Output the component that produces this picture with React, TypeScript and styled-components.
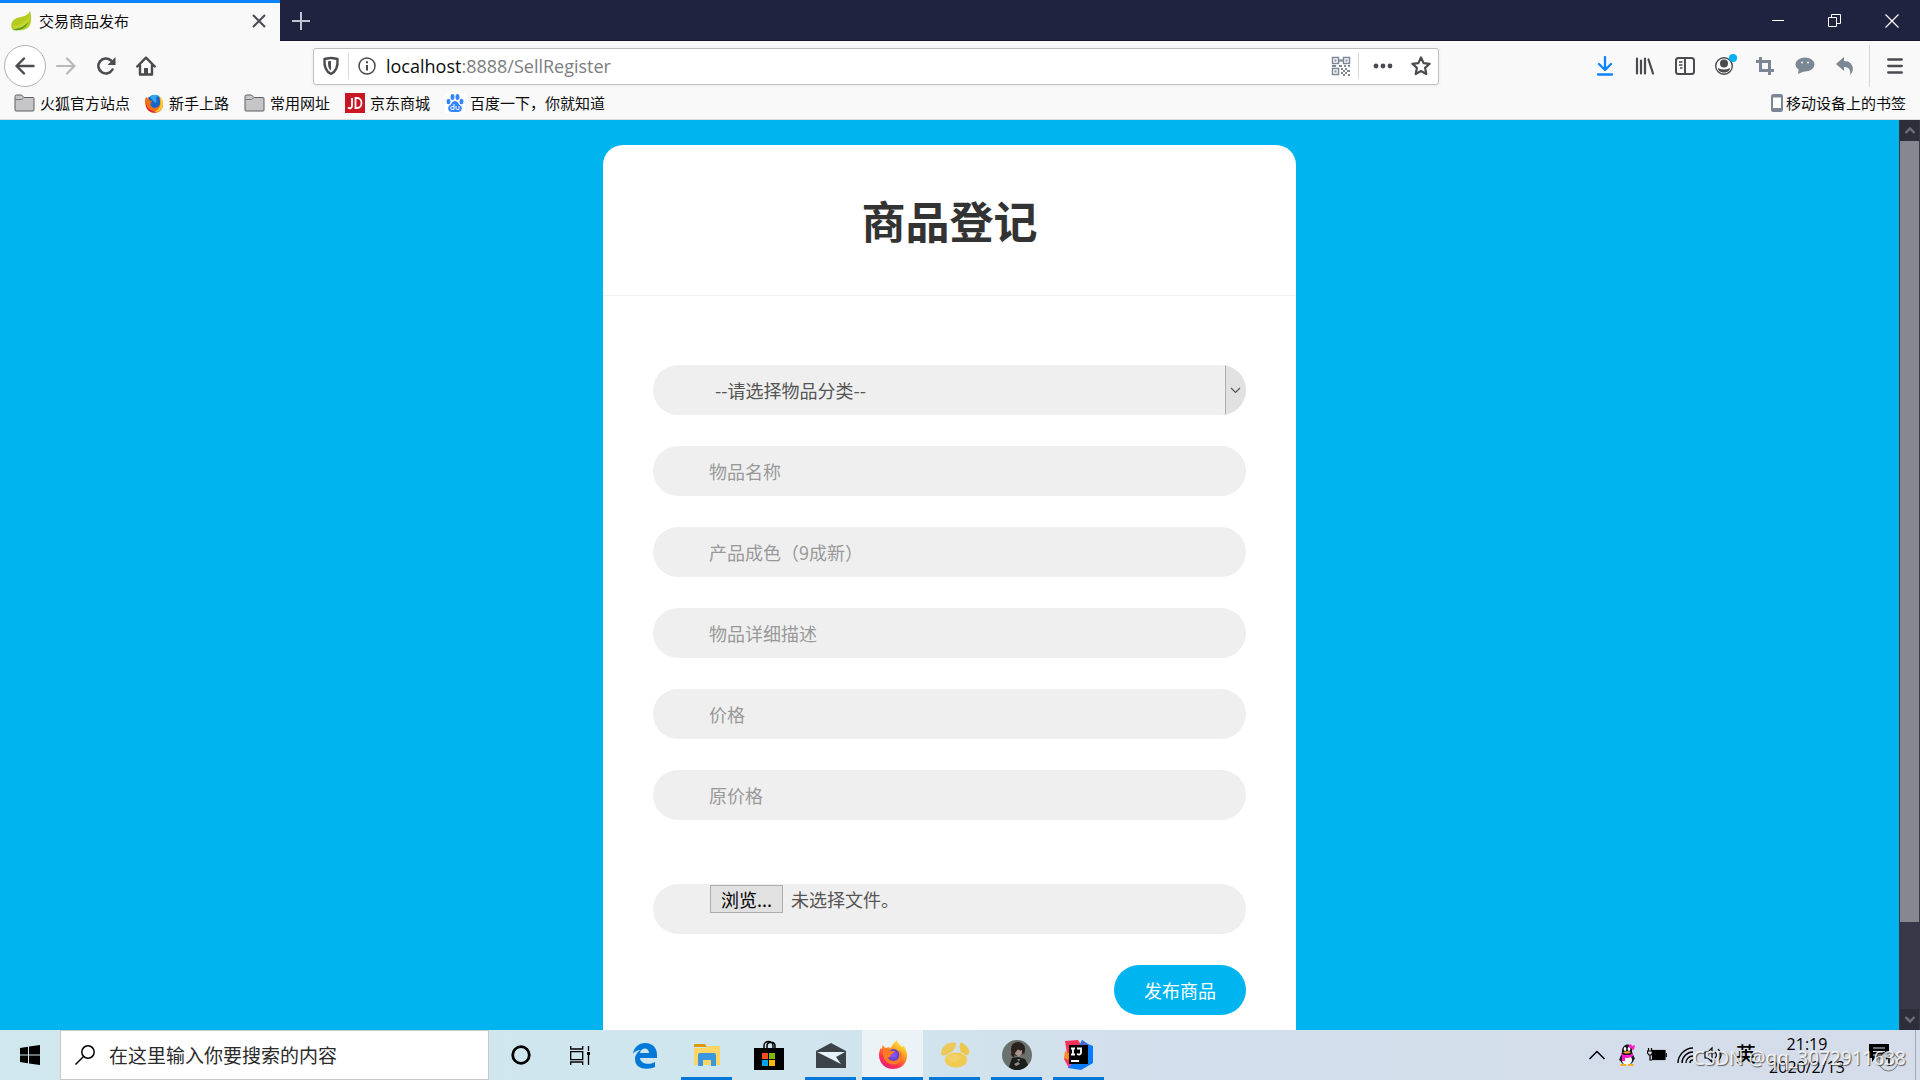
import React from "react";
import styled, { createGlobalStyle, css } from "styled-components";

const sans = `"Noto Sans", "Noto Sans CJK SC", sans-serif`;
const cjk = `"Noto Sans CJK SC", "Noto Sans", sans-serif`;

const GlobalStyle = createGlobalStyle`
  *, *::before, *::after { box-sizing: border-box; }
  html, body, #root { height: 100%; margin: 0; }
  body { overflow: hidden; font-family: ${cjk}; font-size: 15px; color: #0c0c0d; }
  button, input, select { font: inherit; color: inherit; margin: 0; }
  button { border: 0; padding: 0; background: none; }
  a { color: inherit; text-decoration: none; }
  svg { display: block; flex: none; }
`;

const Desktop = styled.div`
  display: flex;
  flex-direction: column;
  height: 100vh;
`;

/* ---------- browser chrome ---------- */

const TitleBar = styled.header`
  display: flex;
  height: 41px;
  background: #202340;
  box-shadow: inset 0 -1px #15162c;
`;

const Tab = styled.div`
  display: flex;
  align-items: center;
  gap: 7px;
  width: 280px;
  padding: 0 13px 2px 10px;
  border-top: 3px solid #0a84ff;
  background: #f9f9fa;
`;

const TabTitle = styled.span`
  flex: 1;
  line-height: 20px;
`;

const IconButton = styled.button<{ $w?: number }>`
  display: flex;
  align-items: center;
  justify-content: center;
  width: ${(p) => p.$w ?? 40}px;
  color: #4a4a4f;
`;

const WindowControls = styled.div`
  display: flex;
  margin-left: auto;
`;

const Toolbar = styled.nav`
  display: flex;
  align-items: center;
  height: 50px;
  padding-left: 4px;
  background: #f9f9fa;
`;

const NavButtons = styled.div`
  display: flex;
  align-items: center;
  width: 309px;
`;

const BackButton = styled.button`
  display: flex;
  align-items: center;
  justify-content: center;
  width: 42px;
  height: 42px;
  border: 1px solid #b1b1b3;
  border-radius: 50%;
  background: #fff;
  color: #4a4a4f;
`;

const UrlBar = styled.div`
  display: flex;
  align-items: center;
  flex: 0 1 1126px;
  height: 37px;
  padding-right: 3px;
  border: 1px solid #bebebf;
  border-radius: 3px;
  background: #fff;
  box-shadow: 0 1px 4px rgba(0, 0, 0, 0.06);
`;

const Divider = styled.span<{ $h: number }>`
  width: 1px;
  height: ${(p) => p.$h}px;
  background: #d7d7db;
`;

const Address = styled.div`
  flex: 1;
  padding-left: 1px;
  font: 18px/26px "Open Sans", ${sans};
  color: #7d7d7f;
`;

const Host = styled.span`
  color: #0c0c0d;
`;

const Tools = styled.div`
  display: flex;
  align-items: center;
  margin-left: auto;
`;

const ToolGroup = styled.div`
  display: flex;
  align-items: center;
  padding-right: 4px;
`;

const Bookmarks = styled.nav`
  display: flex;
  align-items: center;
  gap: 15px;
  height: 29px;
  padding: 0 14px 4px;
  border-bottom: 1px solid #d9dadd;
  background: #f9f9fa;
`;

const Bookmark = styled.a<{ $end?: boolean }>`
  display: flex;
  align-items: center;
  gap: 5px;
  line-height: 20px;
  ${(p) =>
    p.$end &&
    css`
      gap: 3px;
      margin-left: auto;
    `}
`;

/* ---------- page ---------- */

const Viewport = styled.div`
  display: flex;
  flex: 1;
  min-height: 0;
`;

const Page = styled.main`
  flex: 1;
  padding: 25px 20px 0;
  overflow: hidden;
  background: #00b4f0;
`;

const Card = styled.form`
  max-width: 693px;
  margin: 0 auto;
  border-radius: 20px;
  background: #fff;
`;

const Heading = styled.h1`
  margin: 0;
  padding: 43px 0;
  border-bottom: 1px solid #efefef;
  font-size: 44px;
  line-height: 64px;
  font-weight: 700;
  text-align: center;
  color: #333;
`;

const Fields = styled.div`
  display: flex;
  flex-direction: column;
  gap: 31px;
  padding: 69px 50px 60px;
  font-size: 18px;
  color: #555;
`;

const pill = css`
  width: 100%;
  height: 50px;
  border: 0;
  border-radius: 25px;
  background: #efefef;
`;

const TextField = styled.input`
  ${pill}
  padding: 0 56px;
  outline: 0;
  &::placeholder { color: #999; opacity: 1; }
`;

const SelectShell = styled.div`
  ${pill}
  display: grid;
  grid-template-columns: 1fr 21px;
  overflow: hidden;
`;

const Select = styled.select`
  grid-area: 1 / 1 / 2 / 3;
  appearance: none;
  padding: 0 62px 1px;
  border: 0;
  outline: 0;
  background: transparent;
`;

const SelectArrow = styled.span`
  grid-area: 1 / 2;
  display: flex;
  align-items: center;
  justify-content: center;
  padding-right: 2px;
  border-left: 1px solid #adadad;
  background: #e1e1e1;
  pointer-events: none;
`;

const FileShell = styled.label`
  ${pill}
  display: flex;
  align-items: flex-start;
  gap: 8px;
  margin-top: 33px;
  padding: 1px 57px;
  line-height: 28px;
`;

const FileInput = styled.input`
  position: absolute;
  width: 1px;
  height: 1px;
  opacity: 0;
`;

const BrowseLabel = styled.span`
  width: 73px;
  height: 28px;
  border: 1px solid #adadad;
  background: #e1e1e1;
  line-height: 26px;
  text-align: center;
  color: #000;
`;

const Submit = styled.button`
  align-self: flex-end;
  width: 132px;
  height: 50px;
  border-radius: 25px;
  background: #00b4f0;
  color: #fff;
`;

const ScrollBar = styled.aside`
  display: flex;
  flex-direction: column;
  width: 21px;
  padding: 0 1px;
  background: #383849;
`;

const ScrollStep = styled.button`
  display: flex;
  align-items: center;
  justify-content: center;
  height: 21px;
  background: #2e2e3b;
  color: #6f6f7b;
`;

const ScrollTrack = styled.div`
  flex: 1;
`;

const ScrollThumb = styled.div`
  height: 90%;
  background: #878791;
`;

/* ---------- taskbar ---------- */

const Taskbar = styled.footer`
  display: flex;
  height: 50px;
  background: linear-gradient(90deg, #d0e7ee 0%, #d0e6ee 38%, #d2dfec 62%, #d5dcea 100%);
  color: #000;
`;

const StartButton = styled(IconButton)`
  color: #000;
`;

const SearchBox = styled.label`
  display: flex;
  align-items: center;
  gap: 14px;
  flex: 0 1 429px;
  padding: 0 14px;
  border: 1px solid #c5c9cb;
  background: #fff;
`;

const SearchInput = styled.input`
  flex: 1;
  min-width: 0;
  padding: 0 0 2px;
  border: 0;
  outline: 0;
  font-size: 19px;
  &::placeholder { color: #2b2b2b; opacity: 1; }
`;

const TaskTile = styled.button<{ $open?: boolean; $active?: boolean }>`
  display: flex;
  align-items: center;
  justify-content: center;
  width: ${(p) => (p.$active ? 61 : 51)}px;
  margin: 0 ${(p) => (p.$active ? 0 : 5)}px 0 ${(p) => (p.$active ? 1 : 6)}px;
  padding-top: 3px;
  border-bottom: 3px solid ${(p) => (p.$open ? "#0078d7" : "transparent")};
  background: ${(p) => (p.$active ? "#ebf3f6" : "none")};
`;

const Tray = styled.div`
  display: flex;
  align-items: center;
  margin-left: auto;
  position: relative;
`;

const ImeButton = styled(IconButton)`
  padding-bottom: 3px;
  font-size: 20px;
  font-weight: 500;
  color: #000;
`;

const Clock = styled.time`
  display: flex;
  flex-direction: column;
  width: 86px;
  padding-top: 2px;
  font: 16px/23px "Open Sans", ${sans};
  text-align: center;
`;

const ActionCenter = styled.button`
  display: flex;
  align-items: center;
  align-self: stretch;
  width: 48px;
  margin-left: 17px;
`;

const ShowDesktop = styled.span`
  align-self: stretch;
  width: 5px;
  border-left: 1px solid #a4abb5;
`;

const Watermark = styled.span`
  position: absolute;
  right: 14px;
  bottom: 9px;
  font: 19px/26px "Noto Sans", sans-serif;
  color: rgba(255, 255, 255, 0.85);
  text-shadow: 1px 1px 1px rgba(50, 50, 50, 0.75);
  white-space: nowrap;
  pointer-events: none;
`;

/* ---------- drawings ---------- */

type IcoProps = { w?: number; h?: number; sw?: number; children: React.ReactNode };
const Ico = ({ w = 20, h = w, sw = 2, children }: IcoProps) => (
  <svg width={w} height={h} viewBox={`0 0 ${w} ${h}`} fill="none" stroke="currentColor" strokeWidth={sw} aria-hidden="true">
    {children}
  </svg>
);

const Leaf = () => (
  <Ico w={22} h={22}>
    <g stroke="none">
      <path d="M20 1c2 7 2 15-4 18-4 2-9 1-13 1-3-3-2-9 2-11C9 6 17 8 20 1z" fill="#b5cc1f" />
      <path d="M2 16c6 0 13-3 18-10-1 7-6 12-15 12z" fill="#d3dc3c" opacity=".6" />
      <path d="M3 20c5 1 13-1 15-8-4 5-8 6-15 8z" fill="#4f9a2b" />
    </g>
  </Ico>
);

const FolderIcon = () => (
  <Ico w={21} h={18} sw={1}>
    <path d="M1 2.500a1.500 1.500 0 0 1 1.500-1.500h5L10 3.500h9a1 1 0 0 1 1 1V16a1 1 0 0 1-1 1H2a1 1 0 0 1-1-1z" fill="#c6c6c8" stroke="#5f5f61" />
    <path d="M1.500 5.500h6l2-1.500" stroke="#77777a" />
  </Ico>
);

const Firefox = ({ size }: { size: number }) => (
  <svg width={size} height={size} viewBox="0 0 30 30" aria-hidden="true">
    <defs>
      <linearGradient id="fxOuter" x1=".8" y1="0" x2=".2" y2="1">
        <stop offset="0" stopColor="#fff44f" />
        <stop offset=".35" stopColor="#ffa21e" />
        <stop offset=".7" stopColor="#ff3b47" />
        <stop offset="1" stopColor="#e31587" />
      </linearGradient>
      <radialGradient id="fxGlobe">
        <stop offset="0" stopColor="#9059ff" />
        <stop offset="1" stopColor="#5b3fc4" />
      </radialGradient>
    </defs>
    <path d="M5 5c1 2 2 3 3 3 2-1 4-1 5 0 1-3 3-6 6-8 0 3 3 4 5 7 1 0 1-1 1-2 4 5 5 11 3 16-2 5-7 8-13 8C7 29 1 23 1 15c0-3 1-6 2-7 0 1 1 1 1 1 0-1 0-3 1-4z" fill="url(#fxOuter)" />
    <circle cx="15.5" cy="15" r="6" fill="url(#fxGlobe)" />
    <path d="M5 10c3-2 6-1 8 1h4c0 2-3 2-4 4 0 2-2 3-4 2 2 4 7 5 10 3 3-2 4-7 1-10 5 2 5 9 2 12-4 4-12 3-15-2-2-3-3-7-2-10z" fill="#ff7a26" />
  </svg>
);

const OldFirefox = () => (
  <Ico w={19} h={19}>
    <g stroke="none">
      <circle cx="9.5" cy="9" r="8" fill="#1666c9" />
      <path d="M5 3c3-3 8-3 10 0-3-1-4 0-4 2 1 1 1 3-1 4z" fill="#38a4ec" />
      <path d="M1 3c1 1 2 1 3 2 0 1 1 2 3 2-1 2-2 3-1 5 2 3 6 2 8 0 2-3 1-6 0-8 5 3 5 9 2 12-3 4-10 4-13 0C0 13-1 7 1 3z" fill="#f46f15" />
      <path d="M14 2c5 3 5 10 2 13-2 3-5 3-7 3 7-3 8-9 5-16z" fill="#ffd02f" />
      <path d="M1 8c0 6 5 9 10 10-6 2-11-3-10-10z" fill="#d9223c" />
    </g>
  </Ico>
);

const JdIcon = () => (
  <Ico w={20} h={20}>
    <rect width="20" height="20" fill="#c81623" stroke="none" />
    <path d="M7 5v8c0 2-2 3-4 1.500M10.500 5v10H12c6 0 6-10 0-10z" stroke="#fff" strokeWidth="1.8" />
  </Ico>
);

const BaiduIcon = () => (
  <Ico w={20} h={20}>
    <rect width="20" height="20" fill="#fff" stroke="none" />
    <g fill="#3385ff" stroke="none">
      <ellipse cx="3.5" cy="8.5" rx="2" ry="2.7" />
      <ellipse cx="7.5" cy="4" rx="2" ry="2.9" />
      <ellipse cx="12.5" cy="4" rx="2" ry="2.9" />
      <ellipse cx="16.5" cy="8.5" rx="2" ry="2.7" />
      <path d="M10 8c3 0 3 3 6 5 2 3 0 6-3 6H7c-3 0-5-3-3-6 3-2 3-5 6-5z" />
    </g>
    <path d="M9 11v5.500H7.200a1.400 1.400 0 0 1 0-3H9M11 13v2.500a1 1 0 0 0 1 1h2V13" stroke="#fff" strokeWidth="1" />
  </Ico>
);

const QrIcon = () => (
  <Ico w={20} h={20} sw={1.5}>
    <g stroke="#7d8896">
      <path d="M1.500 1.500h6v6h-6zM12.500 1.500h6v6h-6zM1.500 12.500h6v6h-6z" />
      <path d="M3.500 4.500h2M14.500 4.500h2M3.500 15.500h2M8 4.500h4M8 10h3M1 10h4M13 10h2M17 10h2M10 13h2M14 13h2M12 15h2M16 15h3M10 17h2M14 17h2M17 19h2M12 19h2" strokeWidth="2" />
    </g>
  </Ico>
);

const Explorer = () => (
  <Ico w={28} h={24}>
    <g stroke="none">
      <path d="M1 2a1 1 0 0 1 1-1h10l2 3H1z" fill="#dc9a00" />
      <path d="M1 5h12l2-2h11a1 1 0 0 1 1 1v18H1z" fill="#ffd666" />
      <path d="M5 23V12a2 2 0 0 1 2-2h14a2 2 0 0 1 2 2v11h-5v-6h-8v6z" fill="#3a96dd" />
    </g>
  </Ico>
);

const Edge = () => (
  <Ico w={26} h={27}>
    <path d="M1 12C2 5 7 1 13 1c8 0 12 5 12 12v3H8c0 5 8 8 15 4v5c-7 3-20 3-20-8 0-4 3-8 6-9-4 0-7 2-8 4zm7-1h9c0-6-8-6-9 0z" fill="#0078d7" stroke="none" />
  </Ico>
);

const Store = () => (
  <Ico w={30} h={30}>
    <path d="M10 9V6c0-6 9-6 9 0v3M13 9V6c0-5 8-5 8 0v3" stroke="#000" strokeWidth="1.5" />
    <path d="M0 8h30v22H0z" fill="#000" stroke="none" />
    <g stroke="none">
      <path d="M8 13h6v6H8z" fill="#f25022" />
      <path d="M15 13h6v6h-6z" fill="#7fba00" />
      <path d="M8 20h6v6H8z" fill="#00a4ef" />
      <path d="M15 20h6v6h-6z" fill="#ffb900" />
    </g>
  </Ico>
);

const Mail = () => (
  <Ico w={30} h={25}>
    <path d="M15 0l15 8v17H0V8z" fill="#3b4248" stroke="none" />
    <path d="M1 9h28l-9 5 5 7L1 9z" fill="#e5f2f8" stroke="none" />
  </Ico>
);

const Navicat = () => (
  <Ico w={30} h={28}>
    <g stroke="none">
      <path d="M1 13C1 6 8 0 16 2c1 5-5 11-10 12-2 1-4 1-5-1z" fill="#ecc95a" />
      <path d="M20 3c1-2 3-1 4 0 4 3 6 6 5 10-2 2-5 2-8-1-1-3-2-6-1-9z" fill="#edc84e" />
      <ellipse cx="16" cy="19" rx="11.5" ry="8" fill="#efcb52" stroke="#d8e1e4" strokeWidth="1" />
      <ellipse cx="14" cy="17" rx="7" ry="4" fill="#f5da7c" opacity=".5" />
    </g>
  </Ico>
);

const Portrait = () => (
  <Ico w={30} h={30}>
    <g stroke="none">
      <circle cx="15" cy="15" r="15" fill="#69726d" />
      <circle cx="16" cy="9" r="7" fill="#2b211f" />
      <path d="M13 9l7 1v4l-3 3-4-3z" fill="#a89488" />
      <path d="M10 5c5-5 14-1 13 5l-1 5-1-6-3 2-1-3-4 5-1 5-3-3z" fill="#2b211f" />
      <path d="M7 27l3-9 6-1 7 2 3 6c-5 6-14 7-19 2z" fill="#1a1f1e" />
      <path d="M15 19l2 3 1-3z" fill="#83837b" />
      <path d="M12 24l4-2 2 2-4 2z" fill="#9a8b7e" />
    </g>
  </Ico>
);

const Idea = () => (
  <Ico w={30} h={30}>
    <g stroke="none">
      <path d="M1 1l13-1 5 8-14 20-5-9 3-5z" fill="#ff3158" />
      <path d="M1 11l5 3-2 6-4-2z" fill="#ff8a1d" />
      <path d="M18 0l6 4 5 2v17l-12 7-13-2 4-8z" fill="#087cfa" />
      <path d="M18 0l7 6-3 4h-5z" fill="#5664c8" />
      <path d="M5 20h8l-9 8z" fill="#c44cb4" />
      <path d="M5 5h19v19H5z" fill="#000" />
    </g>
    <path d="M7 8.500h4M9 8.500v6M7 14.500h4M13 8.500h4v4c0 2-2 2.500-4 1.500" stroke="#fff" strokeWidth="1.8" />
    <path d="M7 21h8" stroke="#fff" strokeWidth="2" />
  </Ico>
);

const Penguin = () => (
  <Ico w={18} h={22}>
    <g stroke="none">
      <path d="M4 9c-1-11 12-11 10-1l3 7-2 1-1-2H4l-1 3-2-1z" fill="#16181d" />
      <ellipse cx="9" cy="15" rx="7" ry="6" fill="#16181d" />
      <ellipse cx="9" cy="16" rx="5" ry="5" fill="#fff" />
      <ellipse cx="7" cy="5" rx="1.3" ry="2" fill="#fff" />
      <ellipse cx="11" cy="5" rx="1.3" ry="2" fill="#fff" />
      <path d="M5 8c3-1 6-1 8 0-2 2-6 2-8 0zM2 20h6v2H3zM10 20h6l-1 2h-5z" fill="#ffab20" />
      <path d="M3 9c4 3 8 3 12 0v3c-3 2-6 2-8 2v3H4v-4zM10 2l3-2 1 2 3-1-1 5-4-2z" fill="#ff19c8" />
    </g>
  </Ico>
);

const fieldPlaceholders = ["物品名称", "产品成色（9成新）", "物品详细描述", "价格", "原价格"];

export default function App() {
  return (
    <Desktop>
      <GlobalStyle />
      <TitleBar>
        <Tab>
          <Leaf />
          <TabTitle>交易商品发布</TabTitle>
          <IconButton $w={16} aria-label="关闭标签页">
            <Ico w={14}><path d="M1 1l12 12M13 1L1 13" /></Ico>
          </IconButton>
        </Tab>
        <IconButton $w={42} aria-label="新建标签页">
          <Ico w={18}><path d="M9 0v18M0 9h18" stroke="#c2c2d0" /></Ico>
        </IconButton>
        <WindowControls>
          <IconButton $w={57} aria-label="最小化">
            <Ico w={12} sw={1}><path d="M0 5.500h12" stroke="#fff" /></Ico>
          </IconButton>
          <IconButton $w={57} aria-label="还原">
            <Ico w={13} sw={1}><path d="M.5 3.500h8v9h-8zM3.500 3V.5h9v9H9" stroke="#fff" /></Ico>
          </IconButton>
          <IconButton $w={57} aria-label="关闭">
            <Ico w={14} sw={1.2}><path d="M.5.5l13 13M13.500.5l-13 13" stroke="#fff" /></Ico>
          </IconButton>
        </WindowControls>
      </TitleBar>

      <Toolbar>
        <NavButtons>
          <BackButton aria-label="后退">
            <Ico w={20} sw={2.4}><path d="M18.500 10H1.500M9 2.500L1.500 10 9 17.500" strokeLinecap="round" strokeLinejoin="round" /></Ico>
          </BackButton>
          <IconButton aria-label="前进">
            <Ico w={20} sw={2.2}><path d="M1 10h17.500M11 2.500l7.500 7.500-7.500 7.500" stroke="#b9b9bb" strokeLinecap="round" strokeLinejoin="round" /></Ico>
          </IconButton>
          <IconButton aria-label="刷新">
            <Ico w={20} sw={2.6}>
              <path d="M16.500 13.500A7.500 7.500 0 1 1 15 4.500" strokeLinecap="round" />
              <path d="M19.500 1v8h-8z" fill="currentColor" stroke="none" />
            </Ico>
          </IconButton>
          <IconButton aria-label="主页">
            <Ico w={20} sw={2.4}>
              <path d="M1.200 10.500L10 1.700l8.800 8.800M4 9v9.500h12V9" strokeLinejoin="round" strokeLinecap="round" />
              <path d="M8 12h4v6H8z" fill="currentColor" stroke="none" />
            </Ico>
          </IconButton>
        </NavButtons>
        <UrlBar>
          <IconButton $w={34} aria-label="跟踪保护">
            <Ico w={18} h={20} sw={2.4}>
              <path d="M9 2c2 0 4 .5 6.500 1C16 10 15 15 9 18 3 15 2 10 2.500 3 5 2.500 7 2 9 2z" strokeLinejoin="round" />
              <path d="M9 5c-1 0-2 .2-3 .4C6 10 6.500 13 9 14.500z" fill="currentColor" stroke="none" />
            </Ico>
          </IconButton>
          <Divider $h={26} />
          <IconButton $w={36} aria-label="网站信息">
            <Ico w={18} sw={1.5}>
              <circle cx="9" cy="9" r="8" />
              <path d="M9 8v5.500M9 4.300v2" strokeWidth="2" />
            </Ico>
          </IconButton>
          <Address><Host>localhost</Host>:8888/SellRegister</Address>
          <IconButton $w={34} aria-label="二维码"><QrIcon /></IconButton>
          <Divider $h={26} />
          <IconButton $w={48} aria-label="页面操作">
            <Ico w={20} h={6}><g fill="currentColor" stroke="none"><circle cx="3" cy="3" r="2.4" /><circle cx="10" cy="3" r="2.4" /><circle cx="17" cy="3" r="2.4" /></g></Ico>
          </IconButton>
          <IconButton $w={28} aria-label="收藏">
            <Ico w={20} sw={2.2}><path d="M10 1.500l2.600 5.600 6 .7-4.500 4.100 1.200 6.100L10 15l-5.300 3 1.200-6.100-4.500-4.100 6-.7z" strokeLinejoin="round" /></Ico>
          </IconButton>
        </UrlBar>
        <Tools>
          <ToolGroup>
            <IconButton aria-label="下载">
              <Ico w={18} h={20} sw={2.3}><path d="M9 1v13M3 8l6 6 6-6M2 18.500h14" stroke="#0a84ff" strokeLinecap="round" strokeLinejoin="round" /></Ico>
            </IconButton>
            <IconButton aria-label="书库">
              <Ico w={20} h={18} sw={2.2}><path d="M2 1.500v15M6 3.500v13M10 1.500v15M13.500 2.500l4.500 14" strokeLinecap="round" /></Ico>
            </IconButton>
            <IconButton aria-label="侧栏">
              <Ico w={20} h={18}>
                <rect x="1" y="1" width="18" height="16" rx="2.5" />
                <path d="M10 1v16" />
                <path d="M4 5h3.500M4 8h3.500M5 11h2.500" strokeWidth="1.3" />
              </Ico>
            </IconButton>
            <IconButton aria-label="账户">
              <Ico w={24} h={24} sw={1.4}>
                <circle cx="11" cy="12" r="8.3" />
                <g fill="currentColor" stroke="none">
                  <circle cx="11" cy="9.5" r="4" />
                  <path d="M5 14c4 2 8 2 12 0 0 6-12 6-12 0z" />
                  <circle cx="20" cy="4" r="4" fill="#00b0f4" />
                </g>
              </Ico>
            </IconButton>
            <IconButton aria-label="截图">
              <Ico w={18} sw={3}><path d="M0 4.500h13.500V18M4.500 0v13.500H18" stroke="#7b8794" /></Ico>
            </IconButton>
            <IconButton aria-label="消息">
              <Ico w={20} h={18}>
                <g stroke="none"><ellipse cx="10" cy="7.500" rx="9.500" ry="7" fill="#7b8794" /><path d="M4 11l-1 6 7-3z" fill="#7b8794" /><circle cx="7" cy="5.500" r="1" fill="#f9f9fa" /><circle cx="13" cy="5.500" r="1" fill="#f9f9fa" /></g>
              </Ico>
            </IconButton>
            <IconButton aria-label="撤销">
              <Ico w={18}><path d="M8 0v4c8 0 12 8 6 14 1-5-1-8-6-8v4L0 7z" fill="#7b8794" stroke="none" /></Ico>
            </IconButton>
          </ToolGroup>
          <Divider $h={42} />
          <IconButton $w={50} aria-label="菜单">
            <Ico w={16} h={16} sw={2.3}><path d="M1.200 1.500h13.600M1.200 8h13.600M1.200 14.500h13.600" strokeLinecap="round" /></Ico>
          </IconButton>
        </Tools>
      </Toolbar>

      <Bookmarks>
        <Bookmark href="#"><FolderIcon />火狐官方站点</Bookmark>
        <Bookmark href="#"><OldFirefox />新手上路</Bookmark>
        <Bookmark href="#"><FolderIcon />常用网址</Bookmark>
        <Bookmark href="#"><JdIcon />京东商城</Bookmark>
        <Bookmark href="#"><BaiduIcon />百度一下，你就知道</Bookmark>
        <Bookmark href="#" $end>
          <Ico w={12} h={18}><rect x="1" y="1" width="10" height="16" rx="1.5" fill="#fff" stroke="#7b8794" /><path d="M1 2h10M1 15.500h10" stroke="#7b8794" strokeWidth="3" /></Ico>
          移动设备上的书签
        </Bookmark>
      </Bookmarks>

      <Viewport>
        <Page>
          <Card onSubmit={(e) => e.preventDefault()}>
            <Heading>商品登记</Heading>
            <Fields>
              <SelectShell>
                <Select aria-label="物品分类">
                  <option>--请选择物品分类--</option>
                </Select>
                <SelectArrow>
                  <Ico w={11} h={7} sw={1.2}><path d="M1 1l4.500 4.500L10 1" /></Ico>
                </SelectArrow>
              </SelectShell>
              {fieldPlaceholders.map((text) => (
                <TextField key={text} type="text" placeholder={text} aria-label={text} />
              ))}
              <FileShell>
                <FileInput type="file" />
                <BrowseLabel>浏览...</BrowseLabel>
                <span>未选择文件。</span>
              </FileShell>
              <Submit type="submit">发布商品</Submit>
            </Fields>
          </Card>
        </Page>
        <ScrollBar>
          <ScrollStep aria-label="向上滚动"><Ico w={12} h={9} sw={2.4}><path d="M1.500 7L6 2.500 10.500 7" /></Ico></ScrollStep>
          <ScrollTrack><ScrollThumb /></ScrollTrack>
          <ScrollStep aria-label="向下滚动"><Ico w={12} h={9} sw={2.4}><path d="M1.500 2L6 6.500 10.500 2" /></Ico></ScrollStep>
        </ScrollBar>
      </Viewport>

      <Taskbar>
        <StartButton $w={60} aria-label="开始">
          <Ico w={20}><path d="M0 3l8-1.200V9.500H0zM9 1.600L20 0v9.500H9zM0 10.500h8v7.700L0 17zM9 10.500h11V20L9 18.400z" fill="currentColor" stroke="none" /></Ico>
        </StartButton>
        <SearchBox>
          <Ico w={20} sw={1.5}><circle cx="13" cy="7" r="6.2" /><path d="M8.500 11.500L.5 19.500" /></Ico>
          <SearchInput type="text" placeholder="在这里输入你要搜索的内容" aria-label="搜索" />
        </SearchBox>
        <TaskTile aria-label="Cortana"><Ico w={20} sw={2.8}><circle cx="10" cy="10" r="8.3" /></Ico></TaskTile>
        <TaskTile aria-label="任务视图">
          <Ico w={26} h={19} sw={1.3}><path d="M.7 0v3h12V0M.7 5.700h12v8H.7zM.7 19v-3h12v3M18.500 0v5M18.500 9v10" /><path d="M17 6h3v3h-3z" fill="currentColor" stroke="none" /></Ico>
        </TaskTile>
        <TaskTile aria-label="Edge"><Edge /></TaskTile>
        <TaskTile $open aria-label="文件资源管理器"><Explorer /></TaskTile>
        <TaskTile aria-label="应用商店"><Store /></TaskTile>
        <TaskTile $open aria-label="邮件"><Mail /></TaskTile>
        <TaskTile $open $active aria-label="Firefox"><Firefox size={30} /></TaskTile>
        <TaskTile $open aria-label="Navicat"><Navicat /></TaskTile>
        <TaskTile $open aria-label="头像"><Portrait /></TaskTile>
        <TaskTile $open aria-label="IntelliJ IDEA"><Idea /></TaskTile>
        <Tray>
          <StartButton $w={30} aria-label="显示隐藏的图标"><Ico w={16} h={10} sw={1.5}><path d="M.5 9L8 1.500 15.500 9" /></Ico></StartButton>
          <StartButton $w={30} aria-label="QQ"><Penguin /></StartButton>
          <StartButton $w={30} aria-label="电池">
            <Ico w={20} h={14} sw={1.2}><rect x="5.5" y="2.5" width="12.5" height="9" fill="#000" /><path d="M19.300 5v4M1.500 0v3M4.500 0v3M.5 3h5v2L4 7H2L.5 5zM3 7v5h2" /></Ico>
          </StartButton>
          <StartButton $w={28} aria-label="网络">
            <Ico w={18} h={16} sw={1.4}><path d="M1 16C1 8 8 1 16 1M5 16C5 10 10 5 16 5M9 16c0-4 3-7 7-7M13 16c0-2 1-3 3-3" /></Ico>
          </StartButton>
          <StartButton $w={28} aria-label="音量">
            <Ico w={20} h={18} sw={1.2}><path d="M1 6h3l4-4v14l-4-4H1zM11 6c2 2 2 4 0 6M14 3c4 4 4 8 0 12" /></Ico>
          </StartButton>
          <ImeButton $w={36}>英</ImeButton>
          <Clock><span>21:19</span><span>2020/2/13</span></Clock>
          <ActionCenter aria-label="通知">
            <Ico w={34} h={34}>
              <path d="M2 6h20v14H8l-3 4v-4H2z" fill="#000" stroke="none" />
              <path d="M6 10h12M6 13.500h12M6 17h8" stroke="#d5dcea" strokeWidth="1" />
              <circle cx="21.5" cy="23.5" r="9.5" fill="#d6dbe4" fillOpacity=".9" stroke="#777" strokeWidth="1" />
              <path d="M19 21l3-2v9" stroke="#111" strokeWidth="1.8" />
            </Ico>
          </ActionCenter>
          <ShowDesktop />
          <Watermark>CSDN @qq_3072911638</Watermark>
        </Tray>
      </Taskbar>
    </Desktop>
  );
}
